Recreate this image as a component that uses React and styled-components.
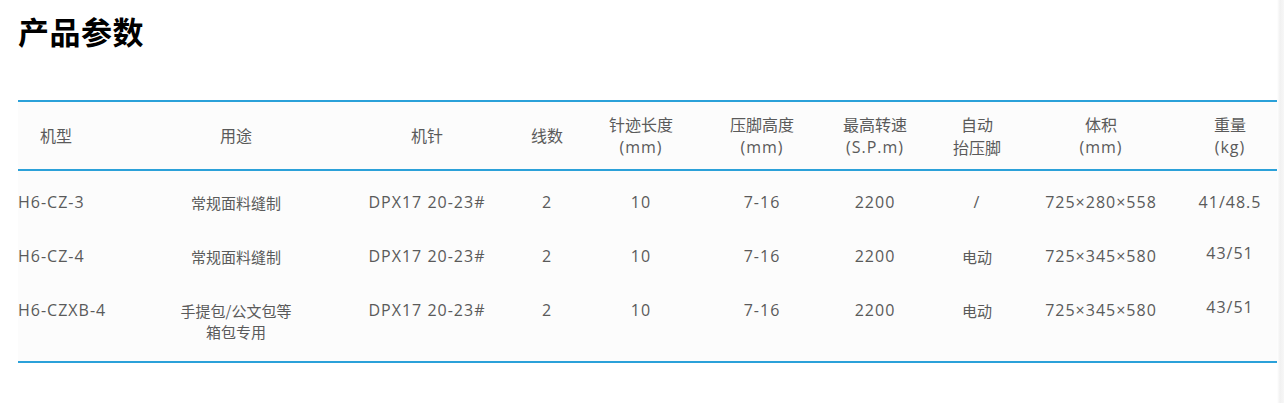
import styled, { createGlobalStyle } from "styled-components";

const GlobalStyle = createGlobalStyle`
  html, body {
    margin: 0;
    padding: 0;
    background: linear-gradient(to right, #fff 1277px, #f1f1f1 1280px, #f7f7f7 1284px);
  }
  body {
    font-family: "Open Sans", "Noto Sans CJK SC", sans-serif;
  }
`;

const COLUMNS = "121px 194px 188px 52px 136px 106px 120px 84px 164px 94px";

const Page = styled.div`
  width: 1284px;
  height: 403px;
  padding: 0 0 0 18px;
  box-sizing: border-box;
`;

const Title = styled.h2`
  margin: 0;
  padding-top: 11px;
  height: 100px;
  box-sizing: border-box;
  font-family: "Noto Sans CJK SC", sans-serif;
  font-size: 31px;
  line-height: 40px;
  font-weight: 700;
  color: #000;
  letter-spacing: 0.5px;
`;

const Table = styled.div`
  width: 1259px;
  border-top: 2px solid #2ba1d9;
  border-bottom: 2px solid #2ba1d9;
  background: #fcfcfc;
  color: #5a5a5a;
  font-family: "Noto Sans CJK SC", sans-serif;
`;

const Row = styled.div`
  display: grid;
  grid-template-columns: ${COLUMNS};
  align-items: ${(p) => (p.$head ? "center" : "start")};
  height: ${(p) => (p.$head ? "67px" : "auto")};
  padding: ${(p) => (p.$head ? "0" : "21px 0 12px")};
  border-bottom: ${(p) => (p.$head ? "2px solid #2ba1d9" : "none")};
  font-size: ${(p) => (p.$head ? "16px" : "15px")};
  &:last-child {
    padding-bottom: 19px;
  }
`;

const Cell = styled.div`
  display: flex;
  flex-direction: column;
  align-items: ${(p) => (p.$left ? "flex-start" : "center")};
  padding-left: ${(p) => p.$indent || 0}px;
  line-height: ${(p) => (p.$head ? "23px" : "21px")};
  white-space: nowrap;
  text-align: center;
  margin-top: ${(p) => p.$lift || 0}px;
`;

const Latin = styled.span`
  font-family: "Open Sans", sans-serif;
  font-size: 16px;
  letter-spacing: 1px;
`;

const isLatin = (s) => /^[\x20-\x7e×]+$/.test(s);

const Text = ({ children }) =>
  isLatin(children) ? <Latin>{children}</Latin> : <span>{children}</span>;

const headers = [
  ["机型"],
  ["用途"],
  ["机针"],
  ["线数"],
  ["针迹长度", "(mm)"],
  ["压脚高度", "(mm)"],
  ["最高转速", "(S.P.m)"],
  ["自动", "抬压脚"],
  ["体积", "(mm)"],
  ["重量", "(kg)"],
];

const rows = [
  ["H6-CZ-3", ["常规面料缝制"], "DPX17 20-23#", "2", "10", "7-16", "2200", "/", "725×280×558", "41/48.5"],
  ["H6-CZ-4", ["常规面料缝制"], "DPX17 20-23#", "2", "10", "7-16", "2200", "电动", "725×345×580", "43/51"],
  ["H6-CZXB-4", ["手提包/公文包等", "箱包专用"], "DPX17 20-23#", "2", "10", "7-16", "2200", "电动", "725×345×580", "43/51"],
];

export default function App() {
  return (
    <Page>
      <GlobalStyle />
      <Title>产品参数</Title>
      <Table>
        <Row $head>
          {headers.map((lines, i) => (
            <Cell key={i} $head $left={i === 0} $indent={i === 0 ? 22 : 0}>
              {lines.map((l) => (
                <Text key={l}>{l}</Text>
              ))}
            </Cell>
          ))}
        </Row>
        {rows.map((r) => (
          <Row key={r[0]}>
            {r.map((v, i) => (
              <Cell
                key={i}
                $left={i === 0}
                $lift={i === 9 && r[9] === "43/51" ? -3 : 0}
              >
                {Array.isArray(v) ? v.map((l) => <Text key={l}>{l}</Text>) : <Text>{v}</Text>}
              </Cell>
            ))}
          </Row>
        ))}
      </Table>
    </Page>
  );
}
